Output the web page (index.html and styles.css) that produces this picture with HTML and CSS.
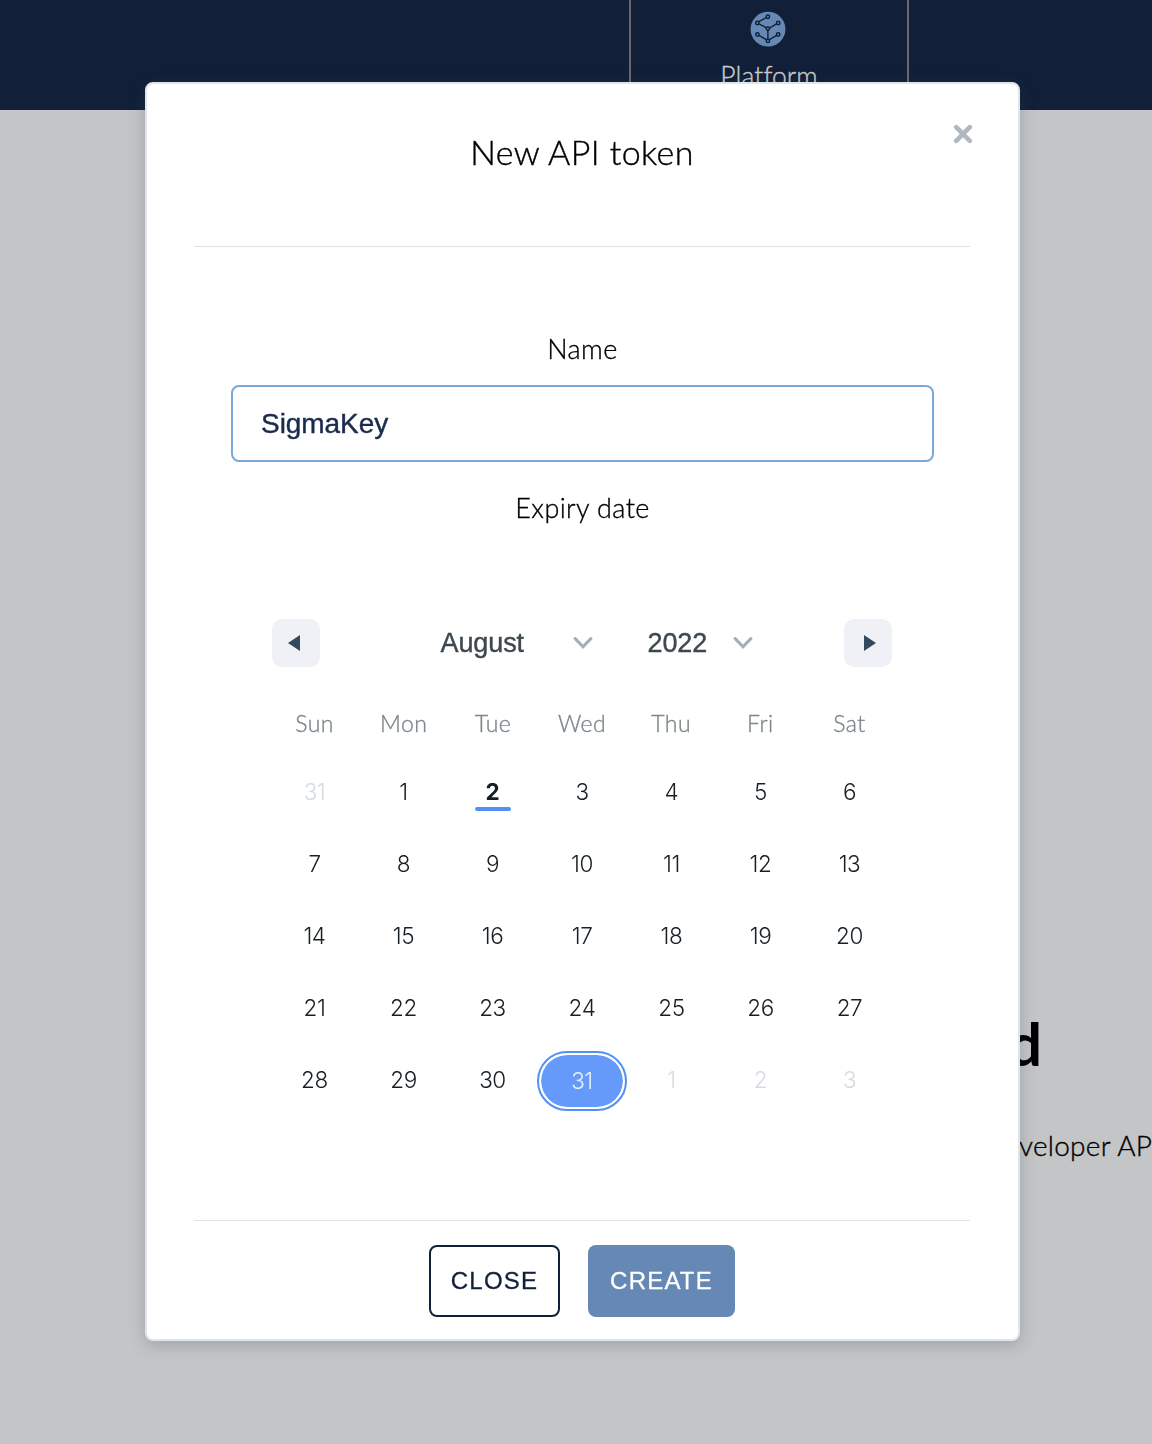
FILE: index.html
```html
<!DOCTYPE html>
<html lang="en">
<head>
<meta charset="utf-8">
<title>New API token</title>
<link rel="stylesheet" href="styles.css">
</head>
<body>
<div class="page">
  <header class="topbar">
    <div class="nav-item">
      <svg class="nav-icon" viewBox="0 0 36 36" width="36" height="36">
        <circle cx="18" cy="18.2" r="17.4" fill="#6589b4"/>
        <g fill="none" stroke="#112038" stroke-width="1.4">
          <path d="M16.2 6.6 9 10.6M9 12.8l7.2 3.9M19.6 16.8l7-3.9M17.9 19.3V28M9 24.4l7.3 4.3M26.7 24.4l-7.2 4.3"/>
          <g stroke-width="1.5"><circle cx="17.9" cy="5.7" r="1.7"/><circle cx="7.4" cy="12" r="1.7"/><circle cx="28.2" cy="12" r="1.7"/><circle cx="17.9" cy="17.6" r="1.7"/><circle cx="7.4" cy="23.5" r="1.7"/><circle cx="28.2" cy="23.5" r="1.7"/><circle cx="17.9" cy="29.9" r="1.7"/></g>
        </g>
      </svg>
      <span class="nav-label">Platform</span>
    </div>
  </header>
  <main class="content">
    <h1 class="content-title">d</h1>
    <p class="content-text">veloper AP</p>
  </main>
</div>
<div class="overlay">
  <section class="modal">
    <header class="modal-head">
      <h2 class="modal-title">New API token</h2>
      <button class="modal-close" aria-label="Close"><svg viewBox="0 0 20 20" width="20" height="20"><path d="M3.2 3.2 16.8 16.8M16.8 3.2 3.2 16.8" stroke="#b1b8bf" stroke-width="4.6" stroke-linecap="round"/></svg></button>
    </header>
    <div class="modal-body">
      <label class="label" for="name">Name</label>
      <input class="input" id="name" type="text" value="SigmaKey">
      <span class="label label-expiry">Expiry date</span>
      <div class="calendar">
        <div class="cal-head">
          <button class="cal-nav" aria-label="Previous"><svg viewBox="0 0 48 48" width="48" height="48"><path d="M28 16v16L16 24z" fill="#34495e"/></svg></button>
          <div class="cal-selects">
            <span class="select month">August</span>
            <svg class="chevron" viewBox="0 0 20 14" width="20" height="14"><path d="M2.2 2.6 10 10.8l7.8-8.2" fill="none" stroke="#a7afb5" stroke-width="3.2" stroke-linecap="round"/></svg>
            <span class="select year">2022</span>
            <svg class="chevron" viewBox="0 0 20 14" width="20" height="14"><path d="M2.2 2.6 10 10.8l7.8-8.2" fill="none" stroke="#a7afb5" stroke-width="3.2" stroke-linecap="round"/></svg>
          </div>
          <button class="cal-nav" aria-label="Next"><svg viewBox="0 0 48 48" width="48" height="48"><path d="M20 16v16l12-8z" fill="#34495e"/></svg></button>
        </div>
        <div class="weekdays"><span>Sun</span><span>Mon</span><span>Tue</span><span>Wed</span><span>Thu</span><span>Fri</span><span>Sat</span></div>
        <div class="days">
          <span class="muted">31</span><span>1</span><span class="today">2</span><span>3</span><span>4</span><span>5</span><span>6</span>
          <span>7</span><span>8</span><span>9</span><span>10</span><span>11</span><span>12</span><span>13</span>
          <span>14</span><span>15</span><span>16</span><span>17</span><span>18</span><span>19</span><span>20</span>
          <span>21</span><span>22</span><span>23</span><span>24</span><span>25</span><span>26</span><span>27</span>
          <span>28</span><span>29</span><span>30</span><span class="selected">31</span><span class="muted">1</span><span class="muted">2</span><span class="muted">3</span>
        </div>
      </div>
    </div>
    <footer class="modal-foot">
      <button class="btn btn-close">CLOSE</button>
      <button class="btn btn-create">CREATE</button>
    </footer>
  </section>
</div>
</body>
</html>
```
FILE: styles.css
```css
* { box-sizing: border-box; }
html, body { margin: 0; height: 100%; overflow: hidden; }
body { font-family: Lato, sans-serif; font-weight: 300; color: #000; background: #c4c5c7; }
button { padding: 0; border: 0; background: none; }
svg { display: block; }

.topbar { height: 110px; background: #112038; display: flex; padding-left: 629px; }
.nav-item { width: 280px; border: solid #66696f; border-width: 0 2px; display: flex; flex-direction: column; align-items: center; padding: 11px 2px 0 0; }
.nav-label { margin-top: 12px; padding-left: 2px; font-size: 26.5px; line-height: 34px; letter-spacing: .1px; color: #cbcbcb; -webkit-text-stroke: .35px #cbcbcb; }

.content { padding: 901px 0 0 1008px; white-space: nowrap; }
.content-title { margin: 0; font-size: 60px; line-height: 64px; font-weight: 700; }
.content-text { margin: 52px 0 0 11px; font-size: 28px; line-height: 36px; letter-spacing: .25px; -webkit-text-stroke: .35px #000; }

.overlay { position: fixed; inset: 0; display: flex; align-items: flex-start; padding: 82px 0 0 145px; }
.modal { width: 875px; height: 1259px; background: #fff; border: 2px solid #dee5eb; border-radius: 8px; box-shadow: 0 4px 16px rgba(46, 62, 80, .25); padding: 0 48px 0 47px; display: flex; flex-direction: column; }
.modal-head { height: 163px; border-bottom: 1px solid #dee5ea; position: relative; flex: none; }
.modal-title { margin: 45px 0 0; text-align: center; font-size: 34px; line-height: 46px; font-weight: 300; letter-spacing: .4px; -webkit-text-stroke: .4px #000; }
.modal-close { position: absolute; right: -3px; top: 40px; }
.modal-body { flex: 1; padding: 84px 36px 0 37px; display: flex; flex-direction: column; align-items: stretch; }
.label { text-align: center; font-size: 27px; line-height: 36px; letter-spacing: .4px; -webkit-text-stroke: .35px #000; }
.input { margin-top: 18px; width: 703px; height: 77px; border: 2px solid #7aa8dc; border-radius: 8px; padding: 0 28px; font: 28px "Liberation Sans", sans-serif; letter-spacing: -.05px; color: #1a2b4c; -webkit-text-stroke: .4px #1a2b4c; outline: 0; background: #fff; }
.label-expiry { margin-top: 28px; }

.calendar { width: 624px; margin: 93px 0 0 39px; }
.cal-head { display: flex; justify-content: space-between; padding: 0 2px; height: 48px; }
.cal-nav { width: 48px; height: 48px; border-radius: 10px; background: #f0f1f6; }
.cal-selects { flex: 1; display: flex; align-items: center; padding-left: 120.5px; }
.select { font: 27px/48px "Liberation Sans", sans-serif; letter-spacing: -.1px; color: #3d484f; -webkit-text-stroke: .4px #3d484f; }
.month { width: 132.5px; }
.year { width: 85.5px; margin-left: 54.5px; }
.weekdays, .days { display: grid; grid-template-columns: repeat(7, 1fr); text-align: center; }
.weekdays { margin-top: 40px; font-size: 23px; line-height: 32px; letter-spacing: .4px; color: #7c878b; -webkit-text-stroke: .35px #7c878b; }
.days { margin-top: 17px; grid-auto-rows: 72px; font-family: Inter, sans-serif; font-size: 22.5px; line-height: 72px; letter-spacing: -.4px; color: #171f24; }
.muted { color: #d5dbe0; }
.today { font-weight: 700; position: relative; }
.today::after { content: ""; position: absolute; left: 27px; top: 51px; width: 36px; height: 4px; border-radius: 2px; background: #5390f5; }
.selected { margin-top: 7px; height: 60px; width: 90px; line-height: 52px; border: 2px solid #5390f5; border-radius: 30px; padding: 2px; background: #659afb content-box; color: #e8f0ff; box-shadow: inset 0 0 0 2px #fff; }

.modal-foot { flex: none; height: 119px; border-top: 1px solid #dee5ea; padding-top: 24px; display: flex; gap: 28px; padding-left: 235px; }
.btn { height: 72px; border-radius: 8px; font: 24px "Liberation Sans", sans-serif; letter-spacing: 1.2px; }
.btn-close { width: 131px; border: 2px solid #112038; color: #112038; -webkit-text-stroke: .3px #112038; }
.btn-create { width: 147px; background: #6589b4; color: #fff; -webkit-text-stroke: .3px #fff; }
```
